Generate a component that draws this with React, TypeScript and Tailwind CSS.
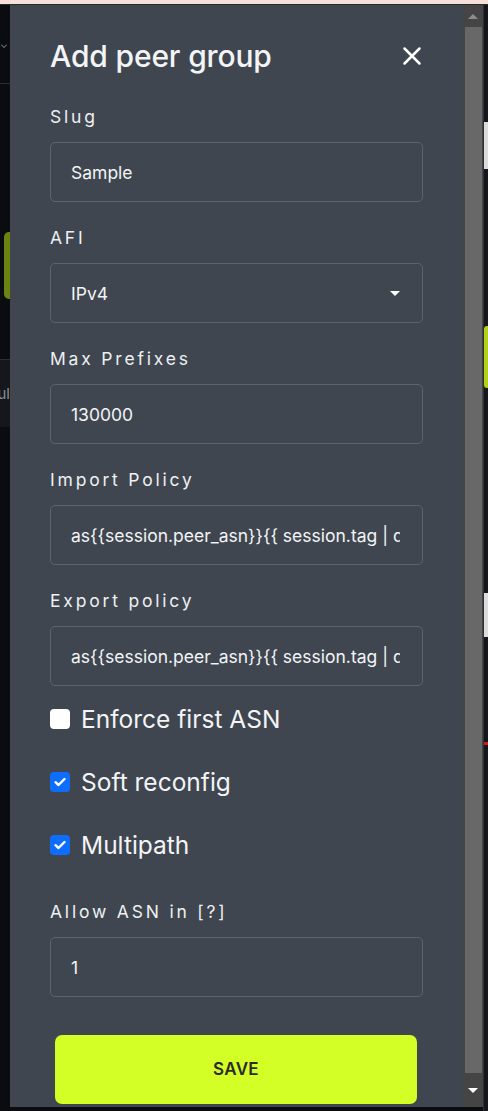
import { X } from 'lucide-react';

const font = { fontFamily: 'Inter, "Noto Sans", sans-serif' };

// Champ texte simple (libellé + boîte)
function Field({ label, value, select = false }: { label: string; value: string; select?: boolean }) {
    return (
        <div className="mb-[24px]">
            <div className="h-6 leading-6 text-[17.5px] tracking-[0.16em] text-[#eef0f2]">{label}</div>
            <div className="mt-[13px] h-[60px] rounded-[5px] border border-[#5c636d] flex items-center pr-[22px] overflow-hidden">
                <input
                    readOnly
                    value={value}
                    className="flex-1 min-w-0 h-full bg-transparent pl-[20px] pr-[0px] text-[17.5px] text-[#f3f4f6] outline-none"
                    style={font}
                />
                {select && (
                    <span className="w-0 h-0 border-l-[5px] border-r-[5px] border-t-[5px] border-l-transparent border-r-transparent border-t-white" />
                )}
            </div>
        </div>
    );
}

function Check({ label, checked }: { label: string; checked: boolean }) {
    return (
        <div className="h-[30px] flex items-center gap-[11px] mb-[33px]">
            {checked ? (
                <span className="w-[20px] h-[20px] rounded-[4px] bg-[#0d6efd] flex items-center justify-center">
                    <svg width="12" height="10" viewBox="0 0 12 10" fill="none">
                        <path d="M1.5 5.2 L4.5 8 L10.5 2" stroke="white" strokeWidth="2.4" strokeLinecap="round" strokeLinejoin="round" />
                    </svg>
                </span>
            ) : (
                <span className="w-[20px] h-[20px] rounded-[4px] bg-white" />
            )}
            <span className="text-[24.5px] text-[#f3f4f6]">{label}</span>
        </div>
    );
}

export default function App() {
    return (
        <div className="w-[488px] h-[1111px] bg-[#0b0c0f] flex flex-col overflow-hidden" style={font}>
            {/* bandeau du haut */}
            <div className="h-[5px] bg-[#f6e1da] border-b border-[#2a2a2a]" />

            <div className="flex flex-1">
                {/* fond à gauche */}
                <div className="w-[10px] flex flex-col">
                    <div className="h-[79px] border-b border-[#2a2d33] flex items-start pt-[34px]">
                        <span className="text-[#8a8f98] text-[10px] leading-none">⌄</span>
                    </div>
                    <div className="h-[148px]" />
                    <div className="ml-[4px] h-[67px] rounded-l-[5px] bg-[#6b8411]" />
                    <div className="h-[61px] border-b border-[#2a2d33]" />
                    <div className="h-[67px] bg-[#15171b] text-[#8a8f98] text-[15px] leading-[67px] flex justify-end whitespace-nowrap">ul</div>
                    <div className="flex-1 bg-[#0b0c0f]" />
                </div>

                {/* panneau */}
                <div className="w-[453px] bg-[#3f4650] px-[40px] pt-[29px] h-[1102px] overflow-hidden">
                    <div className="flex items-center justify-between h-[44px] mb-[27px]">
                        <h2 className="text-[30px] font-medium text-[#f3f4f6] tracking-[-0.005em]">Add peer group</h2>
                        <X className="w-[30px] h-[30px] text-white mr-[-4px]" strokeWidth={2} />
                    </div>

                    <Field label="Slug" value="Sample" />
                    <Field label="AFI" value="IPv4" select />
                    <Field label="Max Prefixes" value="130000" />
                    <Field label="Import Policy" value="as{{session.peer_asn}}{{ session.tag | default }}" />
                    <div className="mb-[-6px]">
                        <Field label="Export policy" value="as{{session.peer_asn}}{{ session.tag | default }}" />
                    </div>

                    <Check label="Enforce first ASN" checked={false} />
                    <Check label="Soft reconfig" checked />
                    <Check label="Multipath" checked />

                    <div className="pt-[7px]">
                        <Field label="Allow ASN in [?]" value="1" />
                    </div>

                    <button className="mt-[14px] mx-[5px] w-[362px] h-[69px] rounded-[7px] bg-[#d4ff26] text-[#2b2b2b] text-[17px] font-semibold tracking-[0.02em]">
                        SAVE
                    </button>
                </div>

                {/* barre de défilement */}
                <div className="w-[20px] h-[1102px] bg-[#454545] flex flex-col items-center">
                    <div className="h-[22px] flex items-center justify-center">
                        <span className="w-0 h-0 border-l-[5px] border-r-[5px] border-b-[5px] border-l-transparent border-r-transparent border-b-[#8c8c8c]" />
                    </div>
                    <div className="w-[17px] flex-1 bg-[#686868]" />
                    <div className="h-[34px] flex items-center justify-center">
                        <span className="w-0 h-0 border-l-[5px] border-r-[5px] border-t-[5px] border-l-transparent border-r-transparent border-t-white" />
                    </div>
                </div>

                {/* fond à droite */}
                <div className="w-[5px] border-l border-[#2e3036] bg-[#15171c] flex flex-col">
                    <div className="h-[117px]" />
                    <div className="h-[47px] bg-[#dcdcdc]" />
                    <div className="h-[157px]" />
                    <div className="h-[62px] bg-[#b4d11a] rounded-l-[3px]" />
                    <div className="h-[205px]" />
                    <div className="h-[44px] bg-[#dcdcdc]" />
                    <div className="h-[105px]" />
                    <div className="h-[3px] bg-[#c81e1e]" />
                </div>
            </div>
        </div>
    );
}
